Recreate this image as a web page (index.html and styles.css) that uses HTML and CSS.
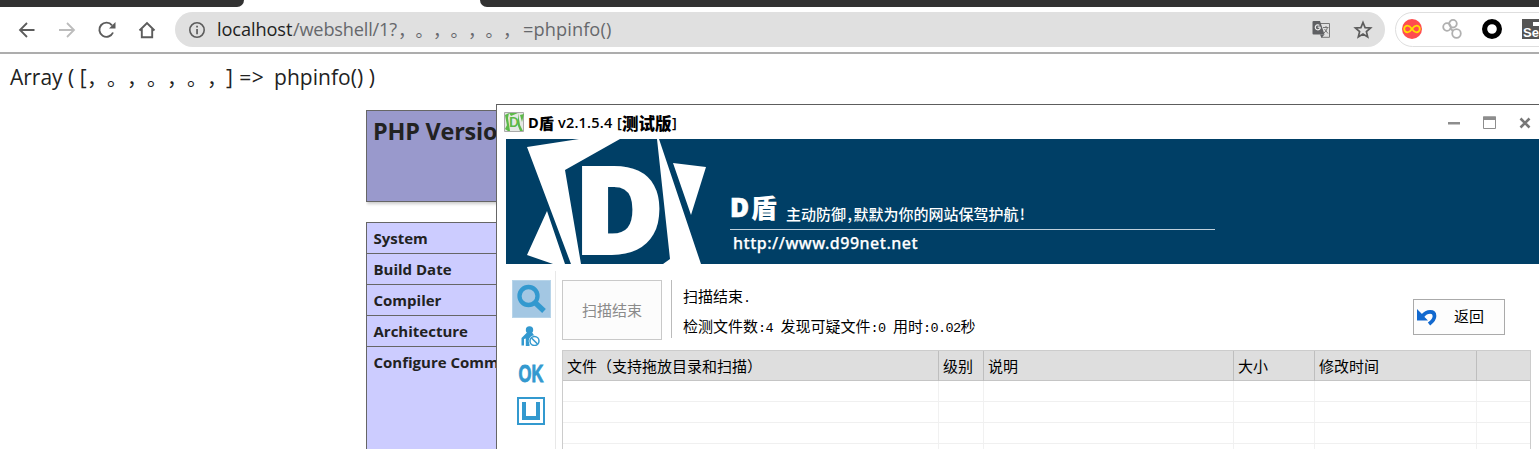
FILE: index.html
```
<!DOCTYPE html>
<html lang="zh-CN">
<head>
<meta charset="utf-8">
<title>phpinfo()</title>
<link rel="stylesheet" href="styles.css">
</head>
<body>
<header class="browser">
  <div class="tabs"><div class="tab-dark tab-left"></div><div class="tab-active"></div><div class="tab-dark tab-right"></div></div>
  <div class="toolbar">
    <nav class="nav">
      <svg width="20" height="20" viewBox="0 0 20 20" fill="none" stroke="#5c5c5c" stroke-width="1.8"><path d="M17.500 10H3M10 3 3 10l7 7"/></svg>
      <svg width="20" height="20" viewBox="0 0 20 20" fill="none" stroke="#bcbcbc" stroke-width="1.800"><path d="M2 10h15M10 3l7 7-7 7"/></svg>
      <svg width="20" height="20" viewBox="0 0 20 20" fill="none" stroke="#5c5c5c" stroke-width="1.900"><path d="M16 12.500A7.100 7.100 0 1 1 15 5.300"/><path d="M18.500 2v6.500H12z" fill="#5c5c5c" stroke="none"/></svg>
      <svg width="20" height="20" viewBox="0 0 20 20" fill="none" stroke="#5c5c5c" stroke-width="1.900"><path d="M2.500 10.500 10 3l7.500 7.500M4.800 9v8.300h10.400V9"/></svg>
    </nav>
    <div class="omnibox">
      <svg class="info" width="18" height="18" viewBox="0 0 18 18"><circle cx="9" cy="9" r="7.200" fill="none" stroke="#5c5c5c" stroke-width="1.600"/><path d="M8.200 4.800h1.700v1.700H8.200zM8.200 8h1.700v5.200H8.200z" fill="#5c5c5c"/></svg>
      <div class="url"><span class="host">localhost</span><span class="path">/webshell/1?</span><span class="marks">，。，。，。，</span><span class="query">=phpinfo()</span></div>
      <svg class="translate" width="19" height="19" viewBox="0 0 19 19"><path d="M7.500 3.500h10v13.800H9.500" fill="none" stroke="#777" stroke-width="1"/><path d="M1.500 1H8l4.500 13.500H1.500Q.500 14.500.500 13.500V2Q.500 1 1.500 1z" fill="#5f6063"/><path d="m8 14.500 1.500 3.500 3-3.500" fill="#5f6063"/><path d="M8.400 7.200H5.700m2.600 0A2.500 2.500 0 1 1 7.400 5.400" fill="none" stroke="#eee" stroke-width="1.200"/><path d="M11 7.500h5.500M14 6v1.500m1.500 0q-.8 3.500-3.500 5.500m.5-4 3.500 4.500" fill="none" stroke="#777" stroke-width="1"/></svg>
      <svg class="star" width="20" height="20" viewBox="0 0 20 20"><path d="m10 2.500 2.100 5.100 5.500.4-4.200 3.600 1.300 5.400L10 14.100 5.300 17l1.300-5.400L2.400 8l5.500-.4z" fill="none" stroke="#5c5c5c" stroke-width="1.700"/></svg>
    </div>
    <div class="extensions">
      <svg width="20" height="20" viewBox="0 0 20 20"><circle cx="10" cy="10" r="10" fill="#ff4d4f"/><path d="M10 10C8.400 7.700 7.300 6.700 5.500 6.700a3.300 3.300 0 0 0 0 6.600C7.300 13.300 8.400 12.300 10 10s2.700-3.300 4.500-3.300a3.300 3.300 0 0 1 0 6.600c-1.800 0-2.900-1-4.500-3.300z" fill="none" stroke="#ffe100" stroke-width="1.800"/></svg>
      <svg width="20" height="20" viewBox="0 0 20 20" fill="none" stroke="#b0b0b0" stroke-width="1.800"><circle cx="5" cy="8" r="3.800"/><circle cx="11" cy="4.700" r="3.800"/><circle cx="14.500" cy="14.500" r="4.300"/><path d="m8 9 3 3"/></svg>
      <svg width="20" height="20" viewBox="0 0 20 20"><circle cx="10" cy="10" r="7.400" fill="none" stroke="#000" stroke-width="5.200"/></svg>
      <div class="selenium"><i></i><b>Se</b></div>
    </div>
  </div>
</header>
<main class="page">
  <p class="dump"><span class="dump-a">Array ( [</span><span class="dump-marks">，。，。，。，</span><span class="dump-b">] =&gt;</span><span class="dump-c">phpinfo() )</span></p>
  <div class="phpinfo">
    <div class="version">PHP Version</div>
    <div class="facts">
      <div>System</div><div>Build Date</div><div>Compiler</div><div>Architecture</div><div class="tall">Configure Command</div>
    </div>
  </div>
</main>
<section class="window">
  <div class="titlebar">
    <svg class="app-icon" width="20" height="20" viewBox="0 0 20 20"><path d="M.5.5h19v19H.5z" fill="#e5e8e4" stroke="#aaa"/><path d="M1 3 5 1l-1 5 2 13H4zM1 17l2-4 1 6zM14 1l2 12 3 6h-3l-2-5zM16 3l4-1-2 8zM5 1h9l-7 3z" fill="#5cb948"/><text x="5" y="15" class="icon-d">D</text></svg>
    <div class="title"><span class="t1">D</span><span class="t2">盾</span><span class="t3">v2.1.5.4</span><span class="t5 open">[</span><span class="t4">测试版</span><span class="t5">]</span></div>
    <div class="controls">
      <svg width="12" height="14" viewBox="0 0 12 14"><path d="M0 6h12v2.500H0z" fill="#8d8d8d"/></svg>
      <svg width="13" height="14" viewBox="0 0 13 14"><path d="M.5 1h12v11.500H.5z" fill="none" stroke="#8d8d8d"/><path d="M0 .5h13V4H0z" fill="#8d8d8d"/></svg>
      <svg width="12" height="14" viewBox="0 0 12 14"><path d="m1.500 2.500 9 9m0-9-9 9" stroke="#777" stroke-width="2.600"/></svg>
    </div>
  </div>
  <div class="banner">
    <svg class="logo" width="204" height="125" viewBox="0 0 204 125" fill="#fff">
      <path d="M21 8 73 0h41L59 31l16 94H65zM41 72 21 116l26 9h12zM151 0h2l42 125h-38l7-5zM167 24l33 4-15 48z"/>
      <text class="logo-d" transform="translate(67.500 115) scale(1.010 1)">D</text>
    </svg>
    <div class="banner-copy">
      <div class="brand-row"><span class="brand-d">D</span><span class="brand-cn">盾</span><span class="slogan">主动防御<span class="half">,</span>默默为你的网站保驾护航<span class="half">!</span></span></div>
      <div class="site">http://www.d99net.net</div>
    </div>
  </div>
  <div class="workspace">
    <aside class="sidebar">
      <div class="tool active"><svg width="30" height="30" viewBox="0 0 30 30" fill="none" stroke="#3399cf"><circle cx="11.500" cy="12" r="9" stroke-width="4.300"/><path d="m18 18.500 9 8.500" stroke-width="5.300"/></svg></div>
      <div class="tool person"><svg width="20" height="20" viewBox="0 0 20 20" fill="#3399cf"><circle cx="8.500" cy="4" r="3.700"/><path d="M5.500 7h6l2 3-5 4v6H4.800v-7.500L3 13v6.500H.500V12z"/><circle cx="13.500" cy="15" r="5.800" fill="#fff"/><circle cx="13.500" cy="15" r="4.500" fill="none" stroke="#3399cf" stroke-width="1.500"/><path d="m10.500 12 6 6" stroke="#3399cf" stroke-width="1.600"/></svg></div>
      <div class="tool ok"><span>OK</span></div>
      <div class="tool unit"><svg width="28" height="28" viewBox="0 0 28 28" fill="none" stroke="#3399cf"><path d="M1 1h26v26H1z" stroke-width="2"/><path d="M7 5v16h14V5" stroke-width="4"/></svg></div>
    </aside>
    <div class="content">
      <div class="actions">
        <div class="scan">扫描结束</div>
        <div class="status"><div>扫描结束<i class="n">.</i></div><div>检测文件数<i class="n">:</i><i class="n">4</i><i class="n"></i>发现可疑文件<i class="n">:</i><i class="n">0</i><i class="n"></i>用时<i class="n">:</i><i class="n">0</i><i class="n">.</i><i class="n">0</i><i class="n">2</i>秒</div></div>
        <div class="back"><svg width="20" height="18" viewBox="0 0 20 18"><path d="M5.500 8C10 2.500 17.500 2.500 17.500 8c0 4-3 6-5.500 8" fill="none" stroke="#1269cf" stroke-width="3.700"/><path d="M0 1v11.500h11L7.500 9 5 6z" fill="#1269cf"/></svg><span>返回</span></div>
      </div>
      <div class="table">
        <div class="row head"><div>文件（支持拖放目录和扫描）</div><div>级别</div><div>说明</div><div>大小</div><div>修改时间</div><div></div></div>
        <div class="row"><div></div><div></div><div></div><div></div><div></div><div></div></div>
        <div class="row"><div></div><div></div><div></div><div></div><div></div><div></div></div>
        <div class="row"><div></div><div></div><div></div><div></div><div></div><div></div></div>
        <div class="row"><div></div><div></div><div></div><div></div><div></div><div></div></div>
      </div>
    </div>
  </div>
</section>
</body>
</html>
```
FILE: styles.css
```
* { box-sizing: border-box; }
body { margin: 0; width: 1539px; height: 449px; overflow: hidden; position: relative; background: #fff; color: #222; font-family: "Open Sans", "Noto Sans CJK SC", sans-serif; }
svg { display: block; flex: none; }
i { font-style: normal; }

.browser { height: 54px; border-bottom: 2px solid #adadad; }
.tabs { display: flex; height: 7px; background: #fff; }
.tab-dark { background: #323232; }
.tab-left { width: 244px; border-bottom-right-radius: 7px; }
.tab-active { width: 236px; }
.tab-right { flex: 1; border-bottom-left-radius: 7px; }
.toolbar { display: flex; height: 45px; padding-top: 5px; overflow: hidden; }
.nav { display: flex; flex: none; gap: 20px; width: 175px; padding: 8px 0 0 17px; }
.omnibox { display: flex; flex: none; align-items: center; width: 1210px; height: 35px; border-radius: 18px; background: #e0e0e0; padding: 0 12px 0 13px; }
.info { margin: 0 11px 0 0; }
.url { display: flex; flex: 1; font-size: 18.200px; line-height: 32px; height: 34px; white-space: nowrap; color: #66686c; }
.host { width: 76px; color: #222; letter-spacing: -.1px; }
.path { width: 105px; letter-spacing: -.2px; }
.marks { width: 125px; font: 17.500px/33px "Noto Sans CJK SC", sans-serif; text-spacing-trim: space-all; font-kerning: none; }
.query { letter-spacing: .1px; }
.translate { margin-right: 22px; }
.extensions { display: flex; flex: none; gap: 20px; width: 190px; height: 35px; margin-left: 10px; padding: 6px 0 0 6px; border: 1px solid #dedede; border-radius: 18px; }
.selenium { position: relative; flex: none; width: 30px; height: 20px; background: #555; color: #fff; }
.selenium b { position: absolute; left: 1px; top: 6px; font: bold 13px/15px "Liberation Sans", sans-serif; }
.selenium i { position: absolute; left: 11px; top: 3px; width: 12px; height: 4px; background: #fff; }

.page { padding: 10px 0 0 10px; }
.dump { display: flex; margin: 0; height: 28px; font-size: 21px; line-height: 27px; white-space: nowrap; }
.dump-a { width: 77px; letter-spacing: 0; }
.dump-marks { width: 139px; font: 20px/27px "Noto Sans CJK SC", sans-serif; text-spacing-trim: space-all; font-kerning: none; }
.dump-b { width: 48px; letter-spacing: .5px; }
.dump-c { letter-spacing: .05px; }
.phpinfo { width: 131px; overflow: hidden; margin: 18px 0 0 356px; font-weight: 700; }
.version { width: 700px; height: 92px; padding: 3px 6px; border: 1px solid #666; background: #9999cc; box-shadow: 1px 2px 3px #ccc; font-size: 23.400px; line-height: 34px; letter-spacing: -.2px; }
.facts { width: 700px; margin-top: 20px; border: 1px solid #666; background: #ccccff; font-size: 15px; }
.facts div { height: 31px; padding-left: 6.500px; border-bottom: 1px solid #666; line-height: 30px; white-space: nowrap; }
.facts .tall { height: 120px; }

.window { position: absolute; left: 496px; top: 104px; width: 1043px; height: 345px; overflow: hidden; background: #fff; border-top: 1px solid #5d5d5d; border-left: 1px solid #666; color: #000; font-family: "Noto Sans CJK SC", sans-serif; }
.titlebar { display: flex; height: 34px; padding: 7px 7px 0 7px; }
.icon-d { font: 900 13px Lato, sans-serif; fill: #5cb948; }
.title { display: flex; flex: 1; margin-left: 4px; font: bold 14.500px/22px "Open Sans", sans-serif; white-space: nowrap; }
.t1 { width: 11px; }
.t2, .t4 { font: 900 15px/22px "Noto Sans CJK SC", sans-serif; }
.t2 { width: 19px; }
.t3 { width: 59px; font-size: 14.500px; font-weight: 600; letter-spacing: .2px; }
.t4 { width: 50px; font-size: 16.500px; }
.t5 { font-size: 14.500px; font-weight: 600; }
.open { width: 5px; }
.controls { display: flex; gap: 23px; width: 84px; padding-top: 4px; flex: none; }
.banner { display: flex; height: 125px; margin-left: 9px; background: #003f66; color: #fff; }
.logo { overflow: hidden; }
.logo-d { font: 900 123px "Open Sans", sans-serif; stroke: #fff; stroke-width: 2px; }
.banner-copy { width: 485px; margin: 52px 0 0 20px; }
.brand-row { display: flex; height: 39px; border-bottom: 1px solid #bfd0dc; white-space: nowrap; }
.brand-d { width: 21px; font: 800 26px/32px "Open Sans", sans-serif; -webkit-text-stroke: .6px #fff; }
.brand-cn { width: 35px; font-size: 26px; font-weight: 900; line-height: 31px; }
.slogan { font-size: 15px; font-weight: 500; line-height: 46px; }
.half { display: inline-block; width: 7.500px; text-align: center; }
.site { margin: 0 0 0 3px; font: 500 16px/26px "Noto Sans", sans-serif; letter-spacing: .5px; -webkit-text-stroke: .25px #fff; }

.workspace { display: flex; height: 190px; }
.sidebar { width: 59px; margin-top: 7px; padding: 9px 0 0 15px; border-right: 1px solid #e8e8e8; }
.tool { display: flex; align-items: center; justify-content: center; width: 38px; height: 38px; }
.active { width: 39px; background: #a3c7e3; border: 1px solid #b7d4e9; }
.person { height: 36px; }
.ok { height: 39px; color: #3399cf; font: bold 24px/38px "Liberation Sans", sans-serif; -webkit-text-stroke: .9px #3399cf; }
.ok span { transform: scaleX(.69); }
.unit { height: 36px; }
.content { width: 976px; padding: 16px 0 0 6px; font-size: 15px; }
.actions { display: flex; height: 70px; }
.scan { width: 100px; height: 60px; border: 1px solid #c9c9c9; background: #fcfcfc; color: #8b8b8b; text-align: center; line-height: 58px; }
.status { flex: 1; height: 58px; margin-left: 9px; padding-left: 11px; border-left: 1px solid #bbb; line-height: 30px; white-space: nowrap; }
.status div { height: 30px; margin-top: 1px; }
.status div + div { margin-top: 0; }
.n { display: inline-block; width: 7.500px; font: 13.500px "Liberation Mono", monospace; text-align: center; }
.back { display: flex; align-items: center; width: 92px; height: 36px; margin: 19px 27px 0 0; padding-left: 3px; border: 1px solid #aaa; background: #fdfdfd; }
.back span { margin: -3px 0 0 17px; }
.table { width: 969px; border: 1px solid #ccc; border-bottom: 0; }
.row { display: grid; grid-template-columns: 376px 45px 250px 81px 162px 1fr; height: 21px; border-bottom: 1px solid #f0f0f0; }
.row div { border-right: 1px solid #f1f1f1; }
.row div:last-child { border-right: 0; }
.head { height: 30px; background: #dedede; border-bottom: 1px solid #c5c5c5; line-height: 30px; white-space: nowrap; }
.head div { padding-left: 4px; border-right-color: #bebebe; }
```
